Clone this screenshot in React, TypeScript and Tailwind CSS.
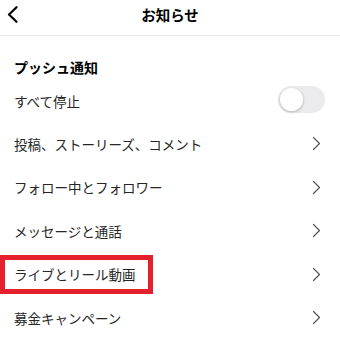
import React from 'react';

const rows = [
  '投稿、ストーリーズ、コメント',
  'フォロー中とフォロワー',
  'メッセージと通話',
  'ライブとリール動画',
  '募金キャンペーン',
];

const Chevron = () => (
  <svg width="9" height="15" viewBox="0 0 9 15" fill="none" className="shrink-0">
    <path d="M1.5 1.5L7.5 7.5L1.5 13.5" stroke="#555" strokeWidth="1.2" strokeLinecap="round" strokeLinejoin="round" />
  </svg>
);

export default function App() {
  return (
    <div
      className="w-[340px] h-[344px] bg-white overflow-hidden text-[#262626]"
      style={{ fontFamily: '"Noto Sans CJK JP", "Noto Sans", sans-serif' }}
    >
      {/* header */}
      <header className="h-[36px] pb-[6px] flex items-center justify-between border-b border-[#e8e8e8] px-[7px]">
        <svg width="11" height="17" viewBox="0 0 11 17" fill="none">
          <path d="M9.5 1.2L2 8.5L9.5 15.8" stroke="#000" strokeWidth="2.2" strokeLinecap="round" strokeLinejoin="round" />
        </svg>
        <span className="text-[14.5px] font-bold text-black leading-5">お知らせ</span>
        <span className="w-[11px]" />
      </header>

      <div className="mt-[21px] px-[14px] text-[14px] font-bold leading-5 text-black">プッシュ通知</div>

      <div className="h-[43px] flex items-center justify-between pl-[14px] pr-[15px] mt-[2px]">
        <span className="text-[13.5px] leading-5">すべて停止</span>
        <div className="w-[47px] h-[27px] rounded-full bg-[#ebebed] p-[2px] -mt-[3px] flex items-center">
          <div className="w-[23px] h-[23px] rounded-full bg-white shadow-[0_1px_3px_rgba(0,0,0,0.25)]" />
        </div>
      </div>

      {rows.map((label, i) => (
        <div key={label} className="relative h-[43.5px] flex items-center justify-between pl-[14px] pr-[19px]">
          <span className="text-[13.5px] leading-5">{label}</span>
          <Chevron />
          {i === 3 && (
            <div className="absolute left-0 top-[2px] w-[153px] h-[39px] border-[5px] border-[#e3202c]" />
          )}
        </div>
      ))}
    </div>
  );
}
